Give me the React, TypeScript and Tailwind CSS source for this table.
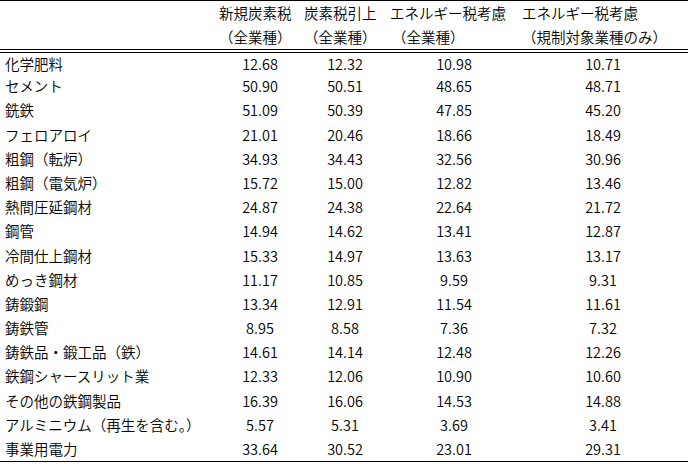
const rows: [string, string, string, string, string][] = [
  ['化学肥料', '12.68', '12.32', '10.98', '10.71'],
  ['セメント', '50.90', '50.51', '48.65', '48.71'],
  ['銑鉄', '51.09', '50.39', '47.85', '45.20'],
  ['フェロアロイ', '21.01', '20.46', '18.66', '18.49'],
  ['粗鋼（転炉）', '34.93', '34.43', '32.56', '30.96'],
  ['粗鋼（電気炉）', '15.72', '15.00', '12.82', '13.46'],
  ['熱間圧延鋼材', '24.87', '24.38', '22.64', '21.72'],
  ['鋼管', '14.94', '14.62', '13.41', '12.87'],
  ['冷間仕上鋼材', '15.33', '14.97', '13.63', '13.17'],
  ['めっき鋼材', '11.17', '10.85', '9.59', '9.31'],
  ['鋳鍛鋼', '13.34', '12.91', '11.54', '11.61'],
  ['鋳鉄管', '8.95', '8.58', '7.36', '7.32'],
  ['鋳鉄品・鍛工品（鉄）', '14.61', '14.14', '12.48', '12.26'],
  ['鉄鋼シャースリット業', '12.33', '12.06', '10.90', '10.60'],
  ['その他の鉄鋼製品', '16.39', '16.06', '14.53', '14.88'],
  ['アルミニウム（再生を含む。）', '5.57', '5.31', '3.69', '3.41'],
  ['事業用電力', '33.64', '30.52', '23.01', '29.31'],
]

const cols = 'grid grid-cols-[220px_80px_90px_128px_170px]'

export default function App() {
  return (
    <div
      className="w-[688px] h-[464px] bg-white text-black text-[14.5px] font-[350] border-t border-black"
      style={{ fontFamily: '"Noto Sans CJK JP", "Noto Sans", sans-serif' }}
    >
      {/* header, two lines */}
      <div className={`${cols} leading-[24px] whitespace-nowrap`}>
        <div />
        <div className="flex flex-col -ml-[1px]">
          <span>新規炭素税</span>
          <span>（全業種）</span>
        </div>
        <div className="flex flex-col pl-[4px]">
          <span>炭素税引上</span>
          <span>（全業種）</span>
        </div>
        <div className="flex flex-col">
          <span>エネルギー税考慮</span>
          <span className="pl-[2px]">（全業種）</span>
        </div>
        <div className="flex flex-col pl-[4px]">
          <span>エネルギー税考慮</span>
          <span>（規制対象業種のみ）</span>
        </div>
      </div>

      <div className="h-[4px] border-y border-black" />

      <div className="border-b border-black">
        {rows.map(([label, a, b, c, d], i) => (
          <div
            key={label}
            className={`${cols} items-center whitespace-nowrap ${i === 0 ? 'h-[21px]' : 'h-[24.2px]'}`}
          >
            <span className="pl-[5px]">{label}</span>
            <span className="text-center">{a}</span>
            <span className="text-center">{b}</span>
            <span className="text-center">{c}</span>
            <span className="text-center">{d}</span>
          </div>
        ))}
      </div>
    </div>
  )
}
